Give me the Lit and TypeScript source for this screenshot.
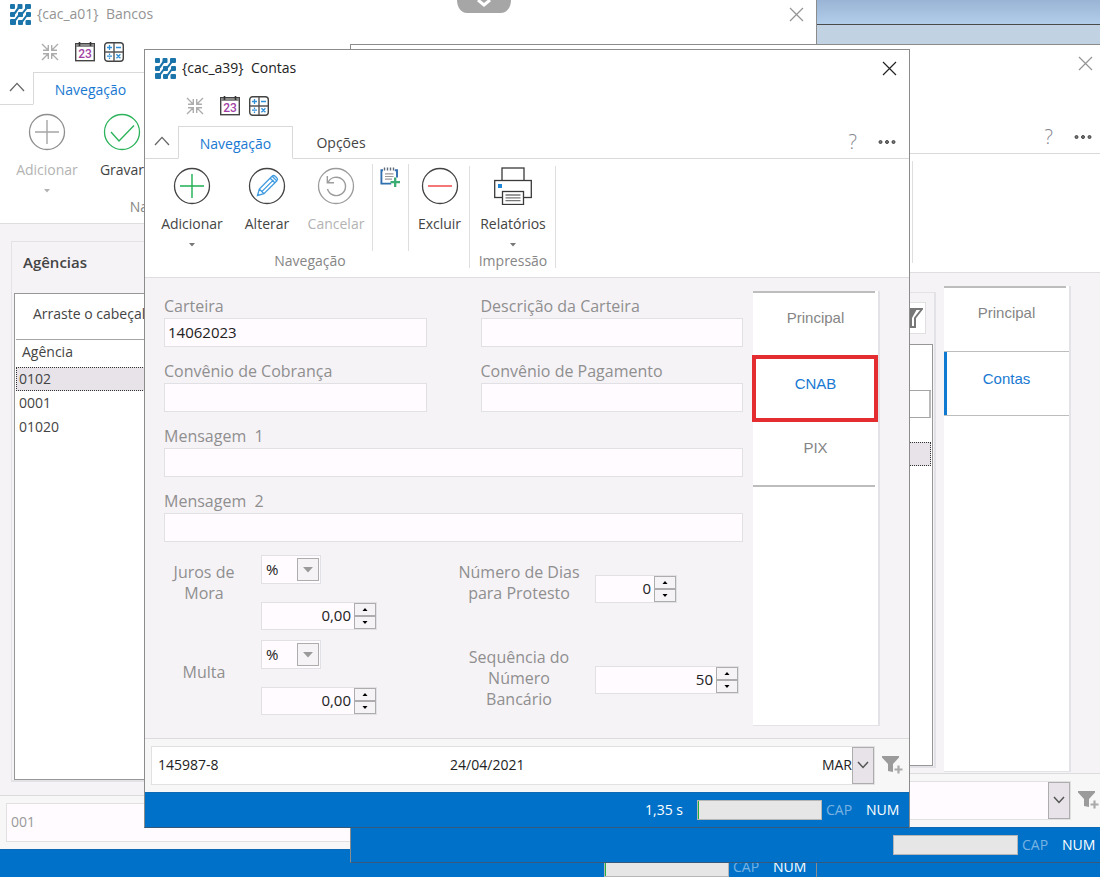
import { LitElement, html, css, svg, nothing, TemplateResult } from "lit";
import { customElement, state } from "lit/decorators.js";
import { classMap } from "lit/directives/class-map.js";

/* ---------- icons ---------- */

const logoIcon = html`<svg class="logo" width="21" height="21" viewBox="0 0 21 21" aria-hidden="true">
  <g fill="#1b74aa">
    <rect x="0" y="0" width="5" height="5" rx="1" /><rect x="7.500" y="0" width="5" height="5" rx="1" /><rect x="15" y="0" width="6" height="5" rx="1" />
    <rect x="0" y="8" width="5" height="5" rx="1" /><rect x="8" y="8" width="5" height="5" rx="1" /><rect x="16" y="8" width="5" height="5" rx="1" />
    <rect x="0" y="15" width="6" height="6" rx="1" /><rect x="8" y="16" width="5" height="5" rx="1" /><rect x="15.500" y="16" width="5.500" height="5" rx="1" />
  </g>
  <path d="M2 11C6 10.500 6.500 4 10.500 2.500M2.500 18.500C6.500 17.500 6.500 11.500 10.500 10.500S15 4 18.500 2.500M10.500 18.500C14.500 17.500 14.500 11.500 18.500 10.500" fill="none" stroke="#1b74aa" stroke-width="2" />
</svg>`;

const shrinkIcon = html`<svg width="18" height="18" viewBox="0 0 18 18" fill="none" stroke="#adadad" stroke-width="1.4" aria-hidden="true">
  <path d="M1 1l6 6M2 7.2h5.3V2M17 1l-6 6M16 7.2h-5.3V2M1 17l6-6M2 10.8h5.3V16M17 17l-6-6M16 10.8h-5.3V16" />
</svg>`;

const calendarIcon = html`<svg width="20" height="20" viewBox="0 0 20 20" aria-hidden="true">
  <rect x="0.7" y="1.7" width="18.6" height="17" fill="#fff" stroke="#444" stroke-width="1.4" />
  <path d="M1 3.5h18" stroke="#8a8a8a" stroke-width="3" />
  <path d="M4.5 0v4M15.5 0v4" stroke="#333" stroke-width="1.6" />
  <text x="10" y="16" text-anchor="middle" font-family="Roboto, sans-serif" font-weight="500" font-size="12" fill="#a23fa6">23</text>
</svg>`;

const calculatorIcon = html`<svg width="20" height="20" viewBox="0 0 20 20" fill="none" aria-hidden="true">
  <rect x="0.7" y="0.7" width="18.6" height="18.6" rx="3" stroke="#444" stroke-width="1.4" />
  <path d="M10 1v18M1 10h18" stroke="#555" stroke-width="1.4" />
  <path d="M3 5.5h5M5.5 3v5M12 5.5h5M3 14.2h5M5.5 11.5v1.4M5.5 15.6v1.4M12.4 12.2l4 4M16.4 12.2l-4 4" stroke="#2d8fd8" stroke-width="1.3" />
</svg>`;

const closeIcon = html`<svg width="15" height="15" viewBox="0 0 15 15" fill="none" stroke="currentColor" stroke-width="1.2" aria-hidden="true">
  <path d="M1 1l13 13M14 1L1 14" />
</svg>`;

const upIcon = html`<svg width="16" height="10" viewBox="0 0 16 10" fill="none" stroke="#666" stroke-width="1.3" aria-hidden="true"><path d="M1 9l7-7.6L15 9" /></svg>`;
const downIcon = html`<svg width="12" height="8" viewBox="0 0 12 8" fill="none" stroke="#555" stroke-width="1.5" aria-hidden="true"><path d="M1 1l5 5.4L11 1" /></svg>`;

const dotsIcon = html`<svg width="18" height="6" viewBox="0 0 18 6" fill="#777" stroke="#444" stroke-width="1" aria-hidden="true">
  <circle cx="2.5" cy="3" r="1.5" /><circle cx="9" cy="3" r="1.5" /><circle cx="15.5" cy="3" r="1.5" />
</svg>`;

const round = (ring: string, inner: TemplateResult) => html`<svg width="38" height="38" viewBox="0 0 38 38" fill="none" aria-hidden="true">
  <circle cx="19" cy="19" r="17.5" stroke=${ring} stroke-width="1.3" />${inner}
</svg>`;

const addIcon = (ring: string, plus: string) => round(ring, svg`<path d="M7 19h24M19 7v24" stroke=${plus} stroke-width="1.4" />`);
const checkIcon = round("#2cb35c", svg`<path d="M8 19l8 9L31 12.500" stroke="#2cb35c" stroke-width="1.4" />`);
const pencilIcon = round("#444", svg`<path d="M9.500 28.500l1.800-6.500L24 9.300c1-1 2.300-.9 3.200 0l1.500 1.500c.9.900 1 2.200 0 3.200L16 26.700zM22.200 11.200l4.600 4.600M24.200 9.300l4.500 4.600M11.300 22l4.700 4.700M14 24.400L25.500 12.900M9.500 28.500l2-.6" stroke="#3f9be0" stroke-width="1.3" />`);
const undoIcon = round("#9c9c9c", svg`<path d="M11 15.500A9.200 9.200 0 1 1 10.500 22M10.300 9v6.700H17" stroke="#9c9c9c" stroke-width="1.4" />`);
const minusIcon = round("#444", svg`<path d="M7 19h24" stroke="#f25555" stroke-width="1.6" />`);

const printerIcon = html`<svg width="38" height="38" viewBox="0 0 38 38" fill="#fff" stroke="#3a3a3a" stroke-width="1.3" aria-hidden="true">
  <rect x="8" y="1" width="22" height="13" /><rect x="0.700" y="13.500" width="36.600" height="17" />
  <rect x="4" y="17" width="4" height="4" fill="#1f86d8" stroke="none" />
  <rect x="8.500" y="24.500" width="21" height="13" /><path d="M11.500 28h15M11.500 30.800h15M11.500 33.600h15" stroke="#777" />
</svg>`;

const noteAddIcon = html`<svg width="20" height="20" viewBox="0 0 20 20" fill="none" aria-hidden="true">
  <path d="M17 10.500V3.200h-2.200M3 3.200H1.400v13.400h9.800" stroke="#2f6fb0" stroke-width="1.900" />
  <path d="M4.500.5v3M7.500.5v3M10.500.5v3M13.500.5v3" stroke="#5c6a78" stroke-width="1.400" />
  <path d="M5 6.800h8.500M5 9.500h8.500M5 12.200h7" stroke="#999" stroke-width="1.200" />
  <path d="M10.500 15.200h9.500M15.200 10.500V20" stroke="#3bac72" stroke-width="2.300" />
</svg>`;

const filterAddIcon = html`<svg width="21" height="20" viewBox="0 0 21 20" fill="#9b9b9b" aria-hidden="true">
  <path d="M0 1h17v1.500L11 9v8l-5-1V9L0 2.500z" /><path d="M12.500 14.500h8M16.500 10.500v8" stroke="#aaa" stroke-width="2.200" />
</svg>`;

const funnelIcon = html`<svg width="24" height="20" viewBox="0 0 24 20" aria-hidden="true">
  <path d="M1 1h22l-7 9v9H9v-9z" fill="#fff" stroke="#777" stroke-width="2" /><path d="M1 1h17l-5 9v9H9v-9z" fill="#777" />
</svg>`;

const caret = html`<svg class="caret" width="6" height="4" viewBox="0 0 6 4" aria-hidden="true"><path d="M0 0h6L3 3.600z" fill="currentColor" /></svg>`;

/* ---------- data ---------- */

interface Action {
  label: string;
  icon: TemplateResult;
  size: string;
  menu?: boolean;
  disabled?: boolean;
}

const editActions: Action[] = [
  { label: "Adicionar", icon: addIcon("#444", "#1fae54"), size: "large", menu: true },
  { label: "Alterar", icon: pencilIcon, size: "small" },
  { label: "Cancelar", icon: undoIcon, size: "medium", disabled: true },
];

const bankActions: Action[] = [
  { label: "Adicionar", icon: addIcon("#8f8f8f", "#a5a5a5"), size: "large", menu: true, disabled: true },
  { label: "Gravar", icon: checkIcon, size: "small" },
];

@customElement("app-root")
export class AppRoot extends LitElement {
  @state() private tab = "CNAB";

  static styles = css`
    :host {
      display: block;
      position: relative;
      min-height: 100vh;
      overflow: hidden;
      background: #0071c8;
      font-family: "Open Sans", "Noto Sans", sans-serif;
      font-size: 14px;
      line-height: 20px;
      color: #444;
    }
    * { box-sizing: border-box; }
    button, input, select { font: inherit; color: inherit; margin: 0; border-radius: 0; }
    button { background: none; border: 0; padding: 0; }
    svg { display: block; flex: none; }

    .desktop {
      height: 45px;
      border-bottom: 20px solid #c1d2e3;
      background: linear-gradient(#9ab4d5, #b3cfeb);
      box-shadow: inset 0 -1px #4a4a4a;
    }

    /* windows */
    .window {
      position: absolute;
      display: flex;
      flex-direction: column;
      background: #fff;
      border: 1px solid #8c8c8c;
      border-bottom-color: #35597a;
    }
    .banks { left: -1px; right: 283px; top: -5px; }
    .agency { left: 350px; right: -6px; top: 44px; }
    .account { left: 144px; right: 190px; top: 49px; }

    .title {
      display: flex;
      align-items: center;
      height: 38px;
      padding: 0 12px 2px 10px;
      gap: 6px;
      color: #222;
      white-space: pre;
    }
    .title h1 { flex: 1; margin: 0; font-size: 14px; font-weight: 400; }
    .inactive .title { color: #949494; }
    .quick { display: flex; align-items: center; height: 38px; padding: 0 0 2px 41px; }
    .quick button { margin-right: 9px; }
    .quick button:first-child { margin-right: 16px; }

    .tabs { display: flex; height: 33px; }
    .tabs > * { border-bottom: 1px solid #d9d9d9; }
    .tabs .fold { display: flex; justify-content: center; padding-top: 10px; width: 33px; }
    .tabs .current {
      width: 115px;
      padding-top: 2px;
      border: 1px solid #d9d9d9;
      border-bottom-color: #fff;
      color: #1979d2;
    }
    .tabs .other { width: 96px; padding-top: 2px; }
    .tabs .tools { display: flex; flex: 1; align-items: center; justify-content: flex-end; gap: 21px; padding-right: 13px; }
    .help { font-size: 20px; font-weight: 300; color: #85858f; }

    .ribbon { display: flex; height: 119px; padding-left: 5px; border-bottom: 1px solid #dedede; }
    .group { display: flex; flex-direction: column; position: relative; }
    .group::after {
      content: "";
      position: absolute;
      right: 0;
      top: 7px;
      bottom: 9px;
      border-right: 1px solid #dedede;
    }
    .wide { width: 557px; }
    .banks .group { min-width: 321px; }
    .group .row { display: flex; height: 92px; }
    .group .name { text-align: center; color: #868686; }
    .action { display: flex; flex-direction: column; align-items: center; padding-top: 8px; }
    .action span { margin-top: 8px; line-height: 22px; }
    .action .caret { margin-top: 8px; color: #777; }
    .action:disabled { color: #b3b3b3; }
    .action:disabled .caret { color: #b3b3b3; }
    .large { width: 84px; }
    .small { width: 66px; }
    .delete { width: 61px; }
    .medium { width: 72px; }
    .printing { width: 86px; }
    .single { width: 37px; margin-top: 5px; height: 87px; border: solid #dedede; border-width: 0 1px; }
    .single button { margin: 3px 0 0 7px; }

    /* window body */
    .body { display: grid; background: #f6f3f7; }
    .account .body { grid-template-columns: minmax(0, 1fr) 127px; gap: 10px; padding: 13px 29px 12px 19px; }
    .agency .body { grid-template-columns: minmax(0, 1fr) 127px; gap: 8px; padding: 13px 34px 1px 11px; min-height: 500px; }
    .banks .body { padding: 17px 12px 13px 11px; min-height: 571px; }

    .form { padding: 5px 0 11px; color: #8f8f8f; font-size: 16px; }
    .fields { display: grid; grid-template-columns: 1fr 1fr; gap: 14px 54px; }
    .field { display: flex; flex-direction: column; gap: 2px; white-space: pre; }
    .full { grid-column: 1 / -1; }
    .form input, .form select {
      width: 100%;
      height: 29px;
      min-width: 0;
      border: 1px solid #e1e0e4;
      background: #fffbff;
      padding: 0 3px 2px;
      color: #222;
      font-size: 15px;
      outline: none;
      appearance: none;
    }
    .form select { padding: 0 4px; }
    .rates {
      display: grid;
      grid-template-columns: 80px 1fr 140px 154px;
      row-gap: 10px;
      margin-top: 13px;
      line-height: 21px;
    }
    .rates .caption { padding-top: 7px; text-align: center; }
    .rates .caption.lone { padding-top: 22px; }
    .pair { display: flex; flex-direction: column; gap: 18px; padding-left: 17px; }
    .side { padding: 20px 0 0 6px; }
    .side.low { padding-top: 26px; }
    .select { display: grid; width: 60px; }
    .select > * { grid-area: 1 / 1; }
    .select .arrow {
      display: flex;
      align-items: center;
      justify-content: center;
      justify-self: end;
      align-self: center;
      width: 22px;
      height: 23px;
      margin-right: 2px;
      border: 1px solid #adadad;
      background: #f6f3f7;
      pointer-events: none;
    }
    .spin { display: grid; grid-template-columns: 1fr 22px; height: 28px; width: 116px; border: 1px solid #e1e0e4; background: #fffbff; }
    .spin.short { width: 82px; }
    .spin.long { width: 144px; }
    .spin input { grid-row: 1 / 3; height: 26px; border: 0; text-align: right; background: none; }
    .spin button { display: flex; align-items: center; justify-content: center; height: 13px; border: 1px solid #adadad; background: #f6f3f7; color: #111; }

    /* vertical tabs */
    .pages { display: flex; flex-direction: column; background: #fff; border: solid #e3e2e6; border-width: 0 2px 1px 0; }
    .pages button {
      position: relative;
      height: 65px;
      padding: 0 0 10px;
      font-family: "Liberation Sans", Arial, sans-serif;
      font-size: 15px;
      color: #858585;
    }
    .pages button:first-child { border-top: 2px solid #bdbdbd; margin-right: 3px; padding: 0 0 14px 3px; }
    .pages button.on { color: #1979d2; }
    .account .pages button:last-child { border-bottom: 2px solid #bdbdbd; margin-right: 3px; height: 66px; padding-left: 3px; }
    .account .pages button.on::after {
      content: "";
      position: absolute;
      inset: -1px 0 -1px -1px;
      border: 4px solid #e32d31;
    }
    .agency .pages button.on { border: solid #bdbdbd; border-width: 1px 0; box-shadow: inset 3px 0 #0f78d0; }

    /* data panels */
    .panel { display: flex; flex-direction: column; border: 2px solid #e3e2e6; border-width: 1px 2px 2px 1px; padding: 0 1px 0 2px; min-width: 0; }
    .agency .panel { margin: 6px 0 4px; }
    .panel header { display: flex; align-items: center; justify-content: space-between; height: 51px; padding: 0 7px 12px 9px; }
    .panel h2 { margin: 0; font-size: 15px; font-weight: 600; }
    .funnel { display: flex; align-items: center; justify-content: center; width: 30px; height: 32px; margin-top: 11px; background: #fff; border: 1px solid #e0e0e0; }
    .sheet { flex: 1; border: 1px solid #979797; background: #fff; padding: 0 1px; white-space: nowrap; overflow: hidden; }
    .drop { height: 46px; padding: 10px 0 0 17px; border-bottom: 1px solid #a5a5a5; }
    table { width: 100%; border-collapse: separate; border-spacing: 0; }
    th { height: 27px; padding: 0 6px 3px; text-align: left; font-weight: 400; }
    .agency th { border-right: 2px solid #bbb; border-bottom: 1px solid #a5a5a5; }
    td { height: 24px; padding: 0 3px; line-height: 20px; }
    tr.picked td { background: #e7e3e8; outline: 1px dotted #333; outline-offset: -1px; }

    /* footer */
    .footer { display: flex; align-items: center; height: 54px; gap: 7px; padding: 0 6px 1px; background: #f7f7f7; border-top: 1px solid #dcdcdc; }
    .record { display: grid; flex: 1; grid-template-columns: 11fr 14fr auto 22px; align-items: center; height: 39px; padding-left: 6px; border: 1px solid #e1e1e1; background: #fffbff; }
    .inactive .record { color: #999; padding-left: 4px; }
    .account .record { background: #fff; color: #222; }
    .record button { display: flex; align-items: center; justify-content: center; height: 37px; border: 1px solid #adadad; background: #e7e3e8; }
    .record .tail { text-align: right; }

    .status { display: flex; align-items: center; justify-content: flex-end; height: 35px; padding-right: 8px; background: #0071c8; color: #fff; border-top: 1px solid #0c69b3; }
    .status progress {
      appearance: none;
      width: 125px;
      height: 20px;
      margin: 0 4px 0 14px;
      border: 1px solid #b5b5b5;
    }
    .status progress::-webkit-progress-bar { background: #e6e6e6; }
    .status progress::-webkit-progress-value { background: #25b03c; }
    .status .cap { width: 40px; color: #79b3e3; }
    .status .num { width: 35px; }

    .pull { position: absolute; top: 0; left: 457px; }
  `;

  private head(title: string) {
    return html`
      <div class="title">${logoIcon}<h1>${title}</h1><button aria-label="Fechar">${closeIcon}</button></div>
      <div class="quick">
        <button aria-label="Recolher">${shrinkIcon}</button>
        <button aria-label="Calendário">${calendarIcon}</button>
        <button aria-label="Calculadora">${calculatorIcon}</button>
      </div>
      <div class="tabs">
        <button class="fold" aria-label="Recolher faixa">${upIcon}</button>
        <button class="current">Navegação</button>
        <button class="other">Opções</button>
        <div class="tools"><button class="help">?</button><button aria-label="Mais">${dotsIcon}</button></div>
      </div>`;
  }

  private action(a: Action) {
    return html`<button class="action ${a.size}" ?disabled=${a.disabled}>
      ${a.icon}<span>${a.label}</span>${a.menu ? caret : nothing}
    </button>`;
  }

  private status(time = "", progress = 0) {
    return html`<div class="status">
      <span>${time}</span><progress max="100" value=${progress} aria-label="Progresso"></progress>
      <span class="cap">CAP</span><span class="num">NUM</span>
    </div>`;
  }

  private footer(first: string, date = "", tail = "") {
    return html`<div class="footer">
      <div class="record">
        <span>${first}</span><span>${date}</span><span class="tail">${tail}</span>
        <button aria-label="Abrir lista">${downIcon}</button>
      </div>
      <button aria-label="Adicionar filtro">${filterAddIcon}</button>
    </div>`;
  }

  private spin(id: string, value: string, size = "") {
    return html`<div class="spin ${size}">
      <input id=${id} inputmode="decimal" .value=${value} />
      <button type="button" aria-label="Aumentar"><svg width="6" height="3" viewBox="0 0 6 3"><path d="M3 0l2.500 3h-5z" /></svg></button>
      <button type="button" aria-label="Diminuir"><svg width="6" height="3" viewBox="0 0 6 3"><path d="M3 3L.5 0h5z" /></svg></button>
    </div>`;
  }

  private unit(label: string) {
    return html`<div class="select">
      <select aria-label=${label}><option>%</option></select>
      <span class="arrow"><svg width="10" height="6" viewBox="0 0 10 6"><path d="M0 0h10L5 5.500z" fill="#9a9a9a" /></svg></span>
    </div>`;
  }

  private field(id: string, label: string, value = "", full = false) {
    return html`<div class=${classMap({ field: true, full })}><label for=${id}>${label}</label><input id=${id} .value=${value} /></div>`;
  }

  private banks() {
    return html`<section class="window banks inactive">
      ${this.head("{cac_a01}  Bancos")}
      <div class="ribbon"><div class="group">
        <div class="row">${bankActions.map((a) => this.action(a))}</div>
        <div class="name">Navegação</div>
      </div></div>
      <div class="body">
        <div class="panel">
          <header><h2>Agências</h2></header>
          <div class="sheet">
            <div class="drop">Arraste o cabeçalho</div>
            <table>
              <tr><th>Agência</th></tr>
              <tr class="picked"><td>0102</td></tr>
              <tr><td>0001</td></tr>
              <tr><td>01020</td></tr>
            </table>
          </div>
        </div>
      </div>
      ${this.footer("001")}${this.status("", 1)}
    </section>`;
  }

  private agency() {
    return html`<section class="window agency inactive">
      ${this.head("Agências")}
      <div class="ribbon"><div class="group wide"></div></div>
      <div class="body">
        <div class="panel">
          <header><span></span><button class="funnel" aria-label="Filtrar">${funnelIcon}</button></header>
          <div class="sheet">
            <div class="drop"></div>
            <table>
              <tr><th></th></tr>
              <tr><td></td></tr>
              <tr class="picked"><td></td></tr>
            </table>
          </div>
        </div>
        <nav class="pages"><button>Principal</button><button class="on">Contas</button></nav>
      </div>
      ${this.footer("")}${this.status()}
    </section>`;
  }

  private account() {
    return html`<section class="window account">
      ${this.head("{cac_a39}  Contas")}
      <div class="ribbon">
        <div class="group">
          <div class="row">
            ${editActions.map((a) => this.action(a))}
            <div class="single"><button aria-label="Nova anotação">${noteAddIcon}</button></div>
            ${this.action({ label: "Excluir", icon: minusIcon, size: "delete" })}
          </div>
          <div class="name">Navegação</div>
        </div>
        <div class="group">
          <div class="row">${this.action({ label: "Relatórios", icon: printerIcon, size: "printing", menu: true })}</div>
          <div class="name">Impressão</div>
        </div>
      </div>
      <div class="body">
        <form class="form">
          <div class="fields">
            ${this.field("carteira", "Carteira", "14062023")}
            ${this.field("descricao", "Descrição da Carteira")}
            ${this.field("cobranca", "Convênio de Cobrança")}
            ${this.field("pagamento", "Convênio de Pagamento")}
            ${this.field("mensagem1", "Mensagem  1", "", true)}
            ${this.field("mensagem2", "Mensagem  2", "", true)}
          </div>
          <div class="rates">
            <label class="caption" for="juros">Juros de<br />Mora</label>
            <div class="pair">${this.unit("Tipo de juros")}${this.spin("juros", "0,00")}</div>
            <label class="caption" for="dias">Número de Dias para Protesto</label>
            <div class="side">${this.spin("dias", "0", "short")}</div>
            <label class="caption lone" for="multa">Multa</label>
            <div class="pair">${this.unit("Tipo de multa")}${this.spin("multa", "0,00")}</div>
            <label class="caption" for="sequencia">Sequência do<br />Número<br />Bancário</label>
            <div class="side low">${this.spin("sequencia", "50", "long")}</div>
          </div>
        </form>
        <nav class="pages">
          ${["Principal", "CNAB", "PIX"].map(
            (name) => html`<button class=${classMap({ on: this.tab === name })} @click=${() => (this.tab = name)}>${name}</button>`
          )}
        </nav>
      </div>
      ${this.footer("145987-8", "24/04/2021", "MAR")}${this.status("1,35 s", 1)}
    </section>`;
  }

  render() {
    return html`
      <div class="desktop"></div>
      ${this.banks()}${this.agency()}${this.account()}
      <svg class="pull" width="54" height="14" viewBox="0 0 54 14" aria-hidden="true">
        <path d="M0 0h54c0 7-4 13-10 13H10C4 13 0 7 0 0z" fill="#a6a6a6" />
        <path d="M21 0l6 5 6-5" fill="none" stroke="#fff" stroke-width="3" />
      </svg>
    `;
  }
}
